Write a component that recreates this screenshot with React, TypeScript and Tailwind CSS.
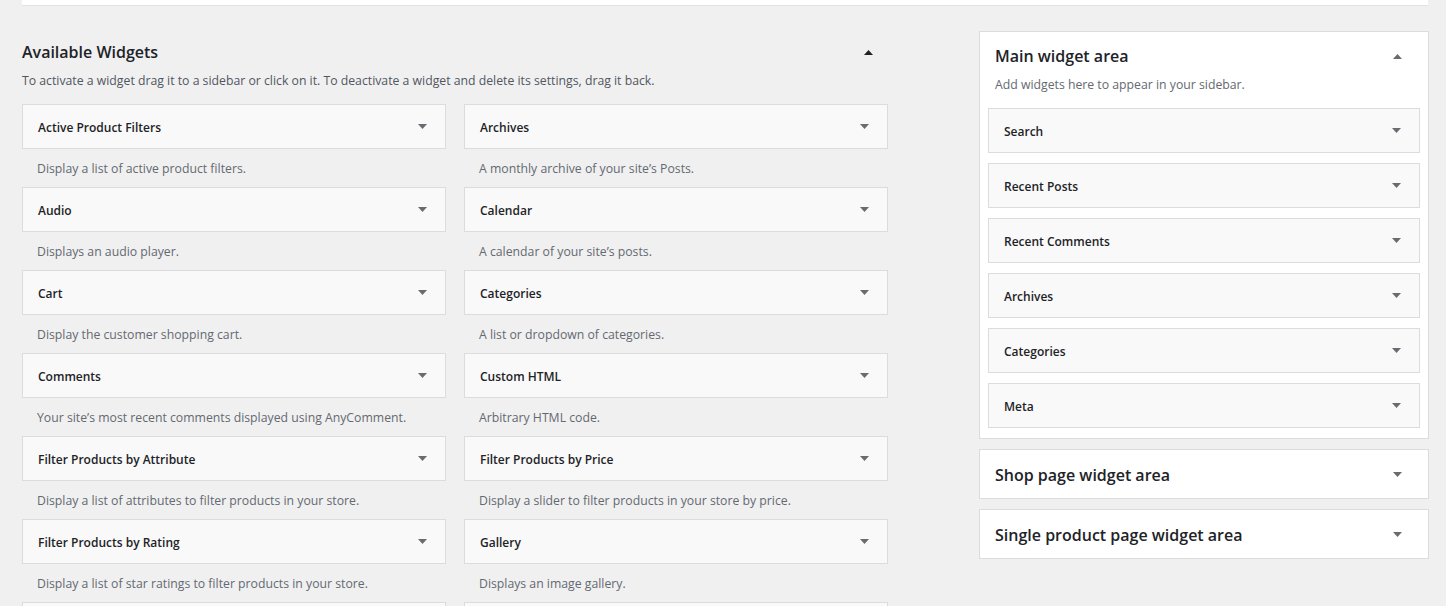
import React from "react";

type W = { title: string; desc: string };

const widgets: W[] = [
  { title: "Active Product Filters", desc: "Display a list of active product filters." },
  { title: "Archives", desc: "A monthly archive of your site’s Posts." },
  { title: "Audio", desc: "Displays an audio player." },
  { title: "Calendar", desc: "A calendar of your site’s posts." },
  { title: "Cart", desc: "Display the customer shopping cart." },
  { title: "Categories", desc: "A list or dropdown of categories." },
  { title: "Comments", desc: "Your site’s most recent comments displayed using AnyComment." },
  { title: "Custom HTML", desc: "Arbitrary HTML code." },
  { title: "Filter Products by Attribute", desc: "Display a list of attributes to filter products in your store." },
  { title: "Filter Products by Price", desc: "Display a slider to filter products in your store by price." },
  { title: "Filter Products by Rating", desc: "Display a list of star ratings to filter products in your store." },
  { title: "Gallery", desc: "Displays an image gallery." },
];

const sidebarItems = ["Search", "Recent Posts", "Recent Comments", "Archives", "Categories", "Meta"];

function Down({ className = "" }: { className?: string }) {
  return (
    <svg width="9" height="5" viewBox="0 0 9 5" className={className}>
      <polygon points="0,0 9,0 4.5,5" fill="currentColor" />
    </svg>
  );
}

function Up({ className = "" }: { className?: string }) {
  return (
    <svg width="9" height="5" viewBox="0 0 9 5" className={className}>
      <polygon points="0,5 9,5 4.5,0" fill="currentColor" />
    </svg>
  );
}

function WidgetBox({ title }: { title: string }) {
  return (
    <div className="h-[45px] border border-[#dcdcde] bg-[#f9f9f9] flex items-center justify-between pl-[15px] pr-[18px]">
      <span className="pt-[2px] text-[12px] leading-[16px] font-semibold text-[#1d2327]">{title}</span>
      <Down className="text-[#686c70]" />
    </div>
  );
}

export default function App() {
  return (
    <div className="h-[606px] overflow-hidden bg-[#f0f0f1] font-['Open_Sans',sans-serif] text-[#1d2327]">
      <div className="ml-[22px] mr-[18px] h-[6px] bg-white border-b border-[#e2e2e4]" />
      <div className="flex pl-[22px]">
        <div className="w-[866px]">
          <div className="mt-[34px] h-[24px] flex items-center justify-between pr-[15px]">
            <h2 className="text-[16px] leading-[24px] font-semibold">Available Widgets</h2>
            <Up className="text-[#1d2327]" />
          </div>
          <p className="mt-[9px] text-[12.25px] leading-[16px] text-[#50575e]">
            To activate a widget drag it to a sidebar or click on it. To deactivate a widget and delete its settings, drag it back.
          </p>
          <div className="mt-[15px] grid grid-cols-2 gap-x-[18px]">
            {widgets.map((w) => (
              <div key={w.title}>
                <WidgetBox title={w.title} />
                <div className="h-[38px] flex items-center pt-[2px] pl-[15px] text-[12.25px] leading-[16px] text-[#646970]">
                  {w.desc}
                </div>
              </div>
            ))}
            <div className="h-[45px] border border-[#dcdcde] bg-[#f9f9f9]" />
            <div className="h-[45px] border border-[#dcdcde] bg-[#f9f9f9]" />
          </div>
        </div>
        <div className="ml-[91px] w-[450px] mt-[25px] flex flex-col gap-[10px]">
          <div className="bg-white border border-[#dcdcde] pb-[10px]">
            <div className="mt-[12px] h-[24px] flex items-center justify-between pl-[15px] pr-[26px]">
              <h2 className="text-[16px] leading-[24px] font-semibold">Main widget area</h2>
              <Up className="text-[#686c70]" />
            </div>
            <p className="mt-[9px] pl-[15px] text-[12.25px] leading-[16px] text-[#646970]">
              Add widgets here to appear in your sidebar.
            </p>
            <div className="mt-[15px] px-[8px] flex flex-col gap-[10px]">
              {sidebarItems.map((s) => (
                <div
                  key={s}
                  className="h-[45px] border border-[#dcdcde] bg-[#f9f9f9] flex items-center justify-between pl-[15px] pr-[18px]"
                >
                  <span className="pt-[2px] text-[12px] leading-[16px] font-semibold text-[#1d2327]">{s}</span>
                  <Down className="text-[#686c70]" />
                </div>
              ))}
            </div>
          </div>
          {["Shop page widget area", "Single product page widget area"].map((t) => (
            <div
              key={t}
              className="h-[50px] bg-white border border-[#dcdcde] flex items-center justify-between pl-[15px] pr-[26px]"
            >
              <h2 className="pt-[2px] text-[16px] leading-[24px] font-semibold">{t}</h2>
              <Down className="text-[#686c70]" />
            </div>
          ))}
        </div>
      </div>
    </div>
  );
}
